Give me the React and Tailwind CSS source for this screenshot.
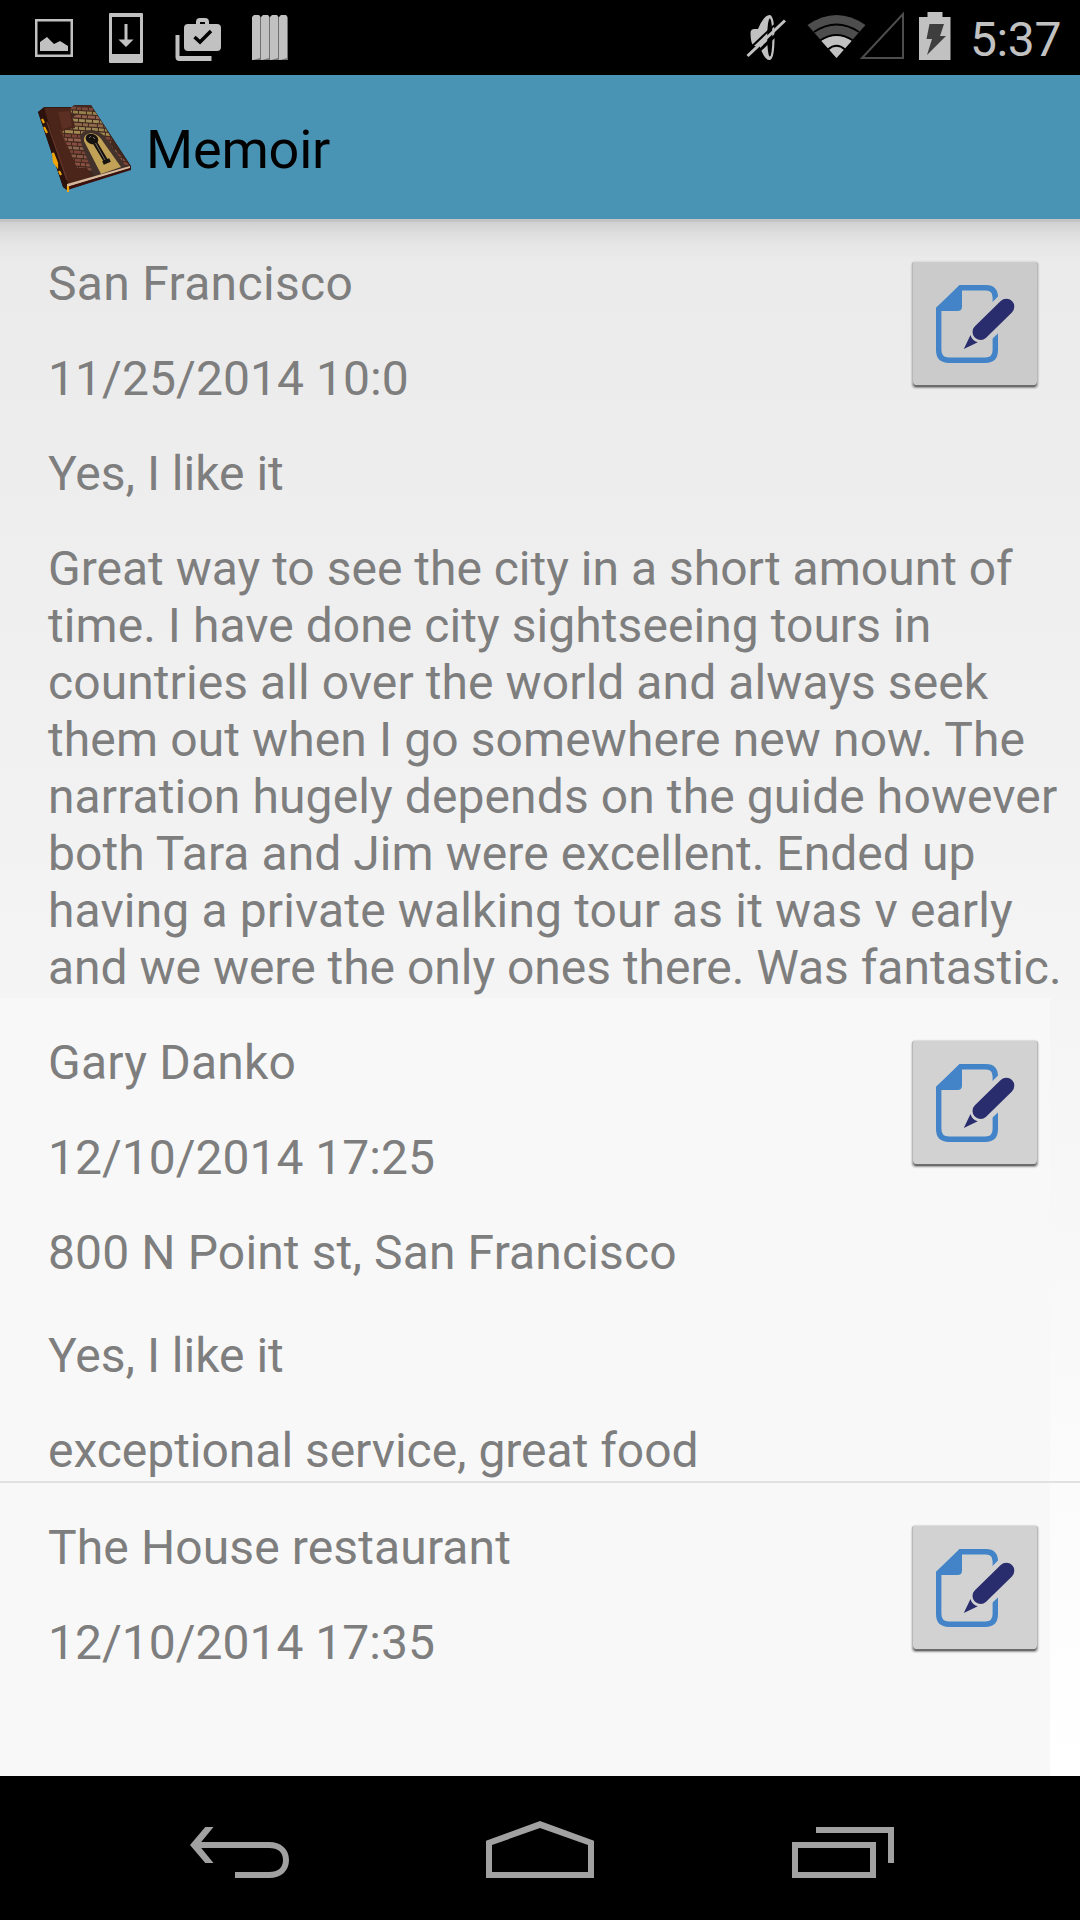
function StatusBar() {
  return (
    <header className="flex h-[75px] shrink-0 items-start justify-between bg-black">
      <svg width="300" height="75" viewBox="0 0 300 75" fill="#c1c1c1">
        <path fillRule="evenodd" d="M35 19H73V57H35ZM37.500 21.500V54.500H70.500V21.500Z" />
        <path d="M40 42l7-5 7 7 6-3 8 5v5H40z" />
        <path fillRule="evenodd" d="M110 13h32q1 0 1 1v48q0 1-1 1h-32q-1 0-1-1V14q0-1 1-1zM112 17V54H140V17Z" />
        <path d="M124.500 24h3v15.500h6L126 47l-7.500-7.500h6z" />
        <path fillRule="evenodd" d="M188 24h8v-2q0-4 4-4h5q4 0 4 4v2h8q4 0 4 4v19q0 4-4 4h-29q-4 0-4-4V28q0-4 4-4zM200 24h5v-2h-5z" />
        <path d="M175.500 35h4v21h32v5h-32q-4 0-4-4z" />
        <path d="M194.500 37l5.500 5 11-11" fill="none" stroke="#000" strokeWidth="3.500" />
        {[252, 261, 270, 279].map((x) => (
          <g key={x}>
            <path d={`M${x} 17l2-2h5l1.500 2V60H${x}z`} />
            <path d={`M${x + 8} 18V58l-7 2H${x + 8.700}V18z`} fill="#777" />
          </g>
        ))}
      </svg>
      <div className="flex">
        <svg width="235" height="75" viewBox="735 0 235 75" fill="#c1c1c1">
          <path d="M750.500 33q0-4 4-4h3.500q6-14 11.500-14 5 0 5 22.500t-5 22.500q-5 0-10-14h-5q-4-1-4-13z" />
          <ellipse cx="769.800" cy="37.500" rx="2.600" ry="19" fill="#000" />
          <path d="M749.500 60L787 24.500" stroke="#000" strokeWidth="3" />
          <path d="M745 53L783 17" stroke="#000" strokeWidth="2" />
          <path d="M747.500 56L785 20.500" stroke="#c1c1c1" strokeWidth="3" />
          <path d="M807.500 25Q836.500 5 865.500 25L836.500 58Z" fill="#4d4d4d" />
          <path d="M821 40.500Q836.500 31 852 40.500L836.500 58Z" />
          <path d="M814 32Q836.500 17 859 32M820 40.500Q836.500 29.500 853 40.500M828 49.500Q836.500 42 845 49.500" fill="none" stroke="#000" strokeWidth="2" />
          <path d="M903 14V58H862Z" fill="none" stroke="#4d4d4d" strokeWidth="2" />
          <path d="M927.500 12h15v5h8v43H919V17h8.500z" />
          <path d="M929.500 24h14.500l-4 12h6l-19 19 5-16h-5.500z" fill="#3e3e3e" />
        </svg>
        <time className="w-[110px] text-[48px] leading-[79px] tracking-[-0.4px] text-[#c1c1c1]">5:37</time>
      </div>
    </header>
  );
}

const brickRows = [
  [107, "#7a4a3c", "6 1 4 1"],
  [111, "#98804c", "5 1 7 1"],
  [115, "#93604d", "7 1 5 1"],
  [119, "#a08a58", "6 1 6 1"],
  [123, "#8f6a4a", "8 1 5 1"],
  [127, "#9a8552", "5 1 6 1"],
  [131, "#a58a52", "6 1 8 1"],
  [135, "#7d4539", "5 1 6 1"],
  [139, "#93604d", "7 1 5 1"],
  [143, "#864d40", "5 1 7 1"],
  [147, "#8a6650", "6 1 6 1"],
  [151, "#7f4438", "7 1 5 1"],
  [155, "#8a5a49", "5 1 6 1"],
  [159, "#7d4539", "6 1 8 1"],
  [163, "#8d5143", "7 1 4 1"],
  [167, "#7a4a3c", "6 1 6 1"],
];

function Journal() {
  return (
    <svg className="ml-[36px] mt-[27px] shrink-0" width="98" height="94" viewBox="36 102 98 94">
      <defs>
        <clipPath id="bricks">
          <path d="M74 105H91L112 139L99 176H91L87 168H77L62 133L64 130L75 128L74 122L72 117L79 114H72L70 109Z" />
          <path d="M96 128L130 166L119 166Z" />
        </clipPath>
      </defs>
      <path d="M38 112L44 107H74V105H91L131 166V169L67 190L63 187Z" fill="#34190f" />
      <path d="M45 108H72L76 128L62 132L77 168H87L91 177L68 184L42 116Z" fill="#4b2519" />
      <path d="M58 112L70 111L72 126L60 130L68 152Z" fill="#5b2f21" />
      <path d="M38 112L44 108L68 184L67 190L63 187Z" fill="#2b120c" />
      <path d="M47 122L67 180" stroke="#613427" strokeWidth="1.500" />
      <path d="M74 105H91L130 166L91 177L87 168H77L62 133L64 130L75 128L70 109Z" fill="#41291f" />
      <g clipPath="url(#bricks)">
        {brickRows.map(([y, color, dash], i) => (
          <path key={y} d={`M${58 + (i % 3)} ${y}L132 ${y + 5}`} stroke={color} strokeWidth="2.800" strokeDasharray={dash} />
        ))}
      </g>
      <path d="M80 136Q82 130 92 130Q102 131 109 142L127 168L94 176L82 146Z" fill="#43322c" />
      <path d="M84 141Q83 134 91 133Q99 134 104 143L121 167L101 174Z" fill="#c0a155" />
      <path d="M67 184L130 166V168L67 187Z" fill="#d5b79c" />
      <path d="M67 187L131 168V170L67 190Z" fill="#3c100c" />
      <path d="M94 141L106 161" stroke="#16120f" strokeWidth="4.500" />
      <ellipse cx="92" cy="139" rx="6.500" ry="5" fill="#16120f" transform="rotate(20 92 139)" />
      <path d="M103 163L110 160" stroke="#16120f" strokeWidth="4" />
      <path d="M95.500 143L105 160M89 138l2-2m2 1 2 2" stroke="#777166" strokeWidth="1" />
      <path d="M42 119l2 4M44 127l3 6M53 153l4 10v3l-3-4zM59 171l2 4M68 186v6" stroke="#eda60b" strokeWidth="2.200" fill="#eda60b" />
    </svg>
  );
}

function EditButton({ first }) {
  return (
    <button
      aria-label="Edit"
      className={`flex h-[126px] w-[126px] shrink-0 rounded-[4px] border-x border-t border-x-[#b8b8b8] border-t-[#dedede] shadow-[0_1px_2px_rgba(0,0,0,0.4),inset_0_-2px_0_#6c6c6c] ${first ? "bg-[#cbcbcb]" : "bg-[#d2d2d2]"}`}
    >
      <svg width="124" height="123" viewBox="913 262 124 123">
        <path d="M995.300 304V297.500Q995.300 287.700 986 287.700H961L938.700 309V350Q938.700 360.200 949 360.200H985.500Q995.300 360.200 995.300 350V330" fill="none" stroke="#4384c8" strokeWidth="5.400" />
        <path d="M959.500 285H962V306.500Q962 311 957.500 311H936V308.500Z" fill="#4384c8" />
        <path d="M991.500 303L999.500 295V332L991.500 339.500Z" className={first ? "fill-[#cbcbcb]" : "fill-[#d2d2d2]"} />
        <path d="M980.500 332L1006.300 306.700" stroke="#292c6d" strokeWidth="16" strokeLinecap="round" />
        <path d="M963.800 349L970.500 335Q972 340.500 977.800 342.300Z" fill="#292c6d" />
      </svg>
    </button>
  );
}

function Entry({ lines, first, className }) {
  return (
    <article className={`flex shrink-0 items-start ${className}`}>
      <div className="ml-[48px] mt-[36px] w-[864px] whitespace-nowrap">
        {lines.map(([text, style]) => (
          <p key={text} className={style}>{text}</p>
        ))}
      </div>
      <div className="mt-[42px]">
        <EditButton first={first} />
      </div>
    </article>
  );
}

const entries = [
  [
    ["San Francisco", "mb-[38px] tracking-[0.32px]"],
    ["11/25/2014 10:0", "mb-[38px] tracking-[0.06px]"],
    ["Yes, I like it", "mb-[38px]"],
    ["Great way to see the city in a short amount of", ""],
    ["time. I have done city sightseeing tours in", "tracking-[0.06px]"],
    ["countries all over the world and always seek", "tracking-[0.08px]"],
    ["them out when I go somewhere new now. The", "tracking-[0.11px]"],
    ["narration hugely depends on the guide however", "tracking-[0.1px]"],
    ["both Tara and Jim were excellent. Ended up", "tracking-[0.06px]"],
    ["having a private walking tour as it was v early", "tracking-[0.14px]"],
    ["and we were the only ones there. Was fantastic.", "tracking-[-0.02px]"],
  ],
  [
    ["Gary Danko", "mb-[38px] tracking-[0.22px]"],
    ["12/10/2014 17:25", "mb-[38px]"],
    ["800 N Point st, San Francisco", "mb-[46px] tracking-[0.13px]"],
    ["Yes, I like it", "mb-[38px]"],
    ["exceptional service, great food", "tracking-[-0.03px]"],
  ],
  [
    ["The House restaurant", "mb-[38px] tracking-[0.12px]"],
    ["12/10/2014 17:35", ""],
  ],
];

function NavBar() {
  return (
    <nav className="flex h-[144px] shrink-0 items-start bg-black pl-[190px] pt-[45px]">
      <svg className="mr-[197px]" width="99" height="57" viewBox="190 1821 99 57" fill="#a1a1a1">
        <path d="M190 1845L205.300 1827H213.500L201.200 1842H269C281 1842 289 1849 289 1860S281 1878 269 1878H235V1872H269C278 1872 283 1868 283 1860S278 1848 269 1848H201.200L213.500 1863H205.300Z" />
      </svg>
      <svg className="mr-[198px]" width="108" height="57" viewBox="486 1821 108 57" fill="#a1a1a1">
        <path fillRule="evenodd" d="M540 1821L594 1840.700V1878H486V1840.700ZM540 1828L492 1845V1872H588V1845Z" />
      </svg>
      <svg width="102" height="57" viewBox="792 1821 102 57" fill="#a1a1a1">
        <path fillRule="evenodd" d="M792 1842H876V1878H792ZM798 1848V1872H870V1848Z" />
        <path d="M816 1827H894V1863H888V1833H816Z" />
      </svg>
    </nav>
  );
}

export default function App() {
  return (
    <div className="flex h-[1920px] w-[1080px] flex-col overflow-hidden font-['Roboto',sans-serif]">
      <StatusBar />
      <div className="flex h-[144px] shrink-0 items-start bg-[#4993b4]">
        <Journal />
        <h1 className="ml-[12px] text-[54px] leading-[149px] tracking-[-0.2px] text-black">Memoir</h1>
      </div>
      <main className="flex h-[1557px] shrink-0 flex-col overflow-hidden bg-[linear-gradient(to_bottom,rgba(0,0,0,0.16)_0px,rgba(0,0,0,0.16)_3px,rgba(0,0,0,0.11)_3px,rgba(0,0,0,0.055)_14px,rgba(0,0,0,0.02)_26px,rgba(0,0,0,0)_42px),linear-gradient(to_bottom,#eaeaea,#ffffff)] text-[48px] leading-[57px] text-[#7e7e7e]">
        <Entry lines={entries[0]} first className="h-[779px]" />
        <div className="h-[483px] w-[1050px] shrink-0 bg-[#f8f8f8]">
          <Entry lines={entries[1]} className="" />
        </div>
        <hr className="h-[2px] w-full shrink-0 border-0 bg-[#e1e1e1]" />
        <div className="h-[293px] w-[1050px] shrink-0 bg-[#f8f8f8]">
          <Entry lines={entries[2]} className="" />
        </div>
      </main>
      <NavBar />
    </div>
  );
}
